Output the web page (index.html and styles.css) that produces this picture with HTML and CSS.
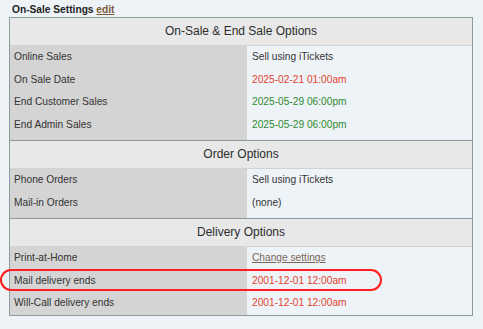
FILE: index.html
```html
<!DOCTYPE html>
<html>
<head>
<meta charset="utf-8">
<link rel="stylesheet" href="styles.css">
</head>
<body>
<div class="wrap">
  <div class="title">On-Sale Settings <a class="edit" href="#">edit</a></div>
  <div class="table">
    <div class="section pad">
      <div class="head">On-Sale &amp; End Sale Options</div>
      <div class="rows">
        <div class="lbl">Online Sales</div><div class="val">Sell using iTickets</div>
        <div class="lbl">On Sale Date</div><div class="val red">2025-02-21 01:00am</div>
        <div class="lbl">End Customer Sales</div><div class="val green">2025-05-29 06:00pm</div>
        <div class="lbl">End Admin Sales</div><div class="val green">2025-05-29 06:00pm</div>
      </div>
    </div>
    <div class="section pad">
      <div class="head">Order Options</div>
      <div class="rows">
        <div class="lbl">Phone Orders</div><div class="val">Sell using iTickets</div>
        <div class="lbl">Mail-in Orders</div><div class="val">(none)</div>
      </div>
    </div>
    <div class="section">
      <div class="head">Delivery Options</div>
      <div class="rows">
        <div class="lbl">Print-at-Home</div><div class="val"><a class="link" href="#">Change settings</a></div>
        <div class="lbl">Mail delivery ends</div><div class="val red">2001-12-01 12:00am</div>
        <div class="lbl">Will-Call delivery ends</div><div class="val red">2001-12-01 12:00am</div>
      </div>
    </div>
  </div>
</div>
<div class="highlight"></div>
</body>
</html>
```
FILE: styles.css
```css
html, body {
  margin: 0;
  padding: 0;
}
body {
  background: #eef3f8;
  font-family: "Liberation Sans", Arial, Helvetica, sans-serif;
  color: #333;
  position: relative;
  height: 329px;
}
.wrap {
  padding: 4px 0 0 9px;
  width: 464px;
}
.title {
  font-size: 10.2px;
  font-weight: bold;
  line-height: 12px;
  height: 13px;
  padding-left: 3px;
  color: #222;
}
.edit {
  color: #7d5a3a;
  text-decoration: underline;
}
.table {
  border: 1px solid #8c9b9c;
  border-top: 0;
}
.section {
  border-top: 1px solid #8c9b9c;
}
.head {
  height: 27px;
  line-height: 27px;
  background: #e8e8e8;
  border-bottom: 1px solid #cfd3d6;
  text-align: center;
  font-size: 12px;
  color: #2c2c2c;
}
.rows {
  display: grid;
  grid-template-columns: 237px 1fr;
  grid-auto-rows: 22.5px;
  background: linear-gradient(to right, #d4d4d4 237px, #eef3f8 237px);
  font-size: 10.2px;
}
.section.pad .rows {
  padding-bottom: 4px;
}
.lbl {
  padding-left: 4px;
  line-height: 22.5px;
  color: #333;
}
.val {
  padding-left: 5px;
  line-height: 22.5px;
  color: #333;
}
.red {
  color: #e2432e;
}
.green {
  color: #2e8a2e;
}
.link {
  color: #7a6656;
  text-decoration: underline;
}
.highlight {
  position: absolute;
  left: 0;
  top: 269px;
  width: 382px;
  height: 22px;
  box-sizing: border-box;
  border: 2px solid #ff1c1c;
  border-radius: 11px;
}
```
